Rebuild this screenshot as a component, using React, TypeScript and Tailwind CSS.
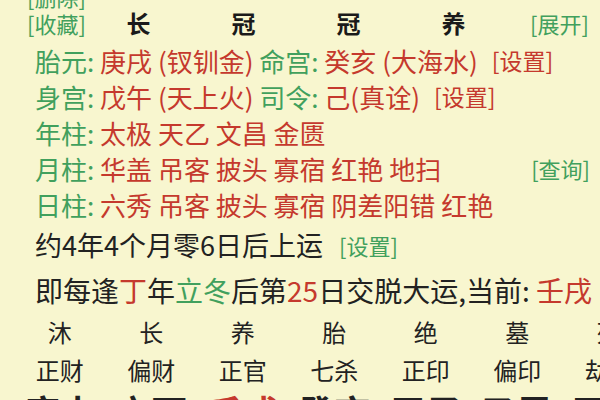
import React from 'react';

const G = 'text-[#41a05d]';
const R = 'text-[#c5392d]';

function Link({ label, className = '' }: { label: string; className?: string }) {
    return <span className={`text-[23px] ${className}`}>[{label}]</span>;
}

const stages = ['沐', '长', '养', '胎', '绝', '墓', '死'];
const gods = ['正财', '偏财', '正官', '七杀', '正印', '偏印', '劫财'];
const luck = ['庚申', '辛酉', '壬戌', '癸亥', '甲子', '乙丑', '丙寅'];

export default function App() {
    return (
        <div className="w-[600px] h-[400px] overflow-hidden bg-[#f8f6cf] text-[#222] font-['Noto_Sans_CJK_SC','Noto_Sans',sans-serif] whitespace-pre">
            {/* cut-off row at the top */}
            <div className="mt-[-16px] h-[24px] pl-[27px] flex items-center">
                <span className={`${G} text-[22px] leading-[24px]`}>[删除]</span>
            </div>

            {/* header row */}
            <div className="h-[30px] pl-[27px] flex items-center">
                <span className={`${G} text-[22px] w-[59px]`}>[收藏]</span>
                {['长', '冠', '冠', '养'].map((c, i) => (
                    <span key={i} className="w-[105px] text-center text-[24px] font-semibold text-[#1a1a1a]">{c}</span>
                ))}
                <span className={`${G} text-[22px] ml-[24px]`}>[展开]</span>
            </div>

            <div className="mt-[4px] h-[36px] pl-[35px] flex items-center text-[26px]">
                <span className={G}>胎元: </span>
                <span className={R}>庚戌 (钗钏金) </span>
                <span className={G}>命宫: </span>
                <span className={R}>癸亥 (大海水)</span>
                <Link label="设置" className={`ml-[14px] ${R}`} />
            </div>

            <div className="h-[36px] pl-[35px] flex items-center text-[26px]">
                <span className={G}>身宫: </span>
                <span className={R}>戊午 (天上火) </span>
                <span className={G}>司令: </span>
                <span className={R}>己(真诠)</span>
                <Link label="设置" className={`ml-[14px] ${R}`} />
            </div>

            <div className="h-[36px] pl-[35px] flex items-center text-[26px]">
                <span className={G}>年柱: </span>
                <span className={R}>太极 天乙 文昌 金匮</span>
            </div>

            <div className="h-[36px] pl-[35px] pr-[10px] flex items-center text-[26px]">
                <span className={G}>月柱: </span>
                <span className={R}>华盖 吊客 披头 寡宿 红艳 地扫</span>
                <span className={`${G} text-[22px] ml-auto`}>[查询]</span>
            </div>

            <div className="h-[36px] pl-[35px] flex items-center text-[26px]">
                <span className={G}>日柱: </span>
                <span className={R}>六秀 吊客 披头 寡宿 阴差阳错 红艳</span>
            </div>

            <div className="h-[46px] pl-[35px] flex items-center text-[27px]">
                <span>约4年4个月零6日后上运</span>
                <span className={`${G} text-[22px] ml-[16px]`}>[设置]</span>
            </div>

            <div className="h-[44px] pl-[35px] flex items-center text-[28px]">
                <span>即每逢</span>
                <span className={R}>丁</span>
                <span>年</span>
                <span className={G}>立冬</span>
                <span>后第</span>
                <span className={R}>25</span>
                <span>日交脱大运,当前: </span>
                <span className={R}>壬戌</span>
            </div>

            <div className="h-[40px] pl-[14px] grid grid-cols-[repeat(7,91.5px)] items-center text-[24px]">
                {stages.map((s, i) => (
                    <span key={i} className="text-center">{s}</span>
                ))}
            </div>

            <div className="h-[32px] pl-[14px] grid grid-cols-[repeat(7,91.5px)] items-center text-[24px]">
                {gods.map((s, i) => (
                    <span key={i} className="text-center">{s}</span>
                ))}
            </div>

            <div className="h-[50px] pl-[14px] grid grid-cols-[repeat(7,91.5px)] items-center text-[36px] font-bold">
                {luck.map((s, i) => (
                    <span key={i} className={`text-center ${i === 2 ? R : ''}`}>{s}</span>
                ))}
            </div>
        </div>
    );
}
